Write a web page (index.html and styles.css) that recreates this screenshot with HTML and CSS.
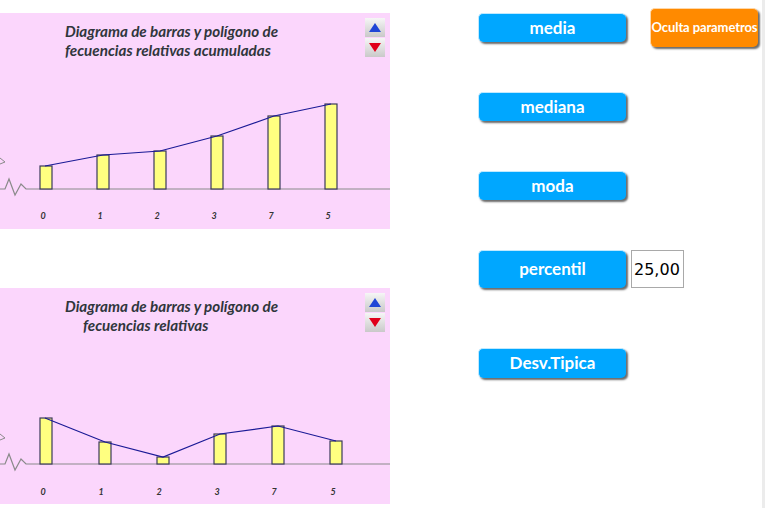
FILE: index.html
```html
<!DOCTYPE html>
<html lang="es">
<head>
  <meta charset="UTF-8">
  <title>Estadística</title>
  <link rel="stylesheet" href="styles.css">
</head>
<body>
  <div class="page">
    <div class="charts">
      <div class="chart">
        <div class="chart-head">
          <h2 class="chart-title">Diagrama de barras y polígono de<br>fecuencias relativas acumuladas</h2>
          <div class="spinner">
            <button class="spin">
              <svg width="20" height="19" viewBox="0 0 20 19"><polygon points="4,14 16,14 10,5" fill="#1f45d6"/></svg>
            </button>
            <button class="spin">
              <svg width="20" height="19" viewBox="0 0 20 19"><polygon points="4,5 16,5 10,14" fill="#e0001a"/></svg>
            </button>
          </div>
        </div>
        <svg class="plot" width="390" height="166" viewBox="0 0 390 166">
          <polyline class="axis-arrow" points="0,95 5,99 0,101"/>
          <polyline class="axis" points="0,126 5,126 9,116 15,132 21,121 26,126 390,126"/>
          <g class="bars">
            <rect x="40" y="103" width="12" height="23"/>
            <rect x="97" y="92" width="12" height="34"/>
            <rect x="154" y="88" width="12" height="38"/>
            <rect x="211" y="73" width="12" height="53"/>
            <rect x="268" y="53" width="12" height="73"/>
            <rect x="325" y="41" width="12" height="85"/>
          </g>
          <polyline class="poly" points="45,103 103,92 160,88 217,73 274,53 331,41"/>
          <g class="labels">
            <text x="43" y="156">0</text>
            <text x="100" y="156">1</text>
            <text x="157" y="156">2</text>
            <text x="214" y="156">3</text>
            <text x="271" y="156">7</text>
            <text x="328" y="156">5</text>
          </g>
        </svg>
      </div>

      <div class="chart">
        <div class="chart-head">
          <h2 class="chart-title">Diagrama de barras y polígono de<br><span class="indent">fecuencias relativas</span></h2>
          <div class="spinner">
            <button class="spin">
              <svg width="20" height="19" viewBox="0 0 20 19"><polygon points="4,14 16,14 10,5" fill="#1f45d6"/></svg>
            </button>
            <button class="spin">
              <svg width="20" height="19" viewBox="0 0 20 19"><polygon points="4,5 16,5 10,14" fill="#e0001a"/></svg>
            </button>
          </div>
        </div>
        <svg class="plot" width="390" height="166" viewBox="0 0 390 166">
          <polyline class="axis-arrow" points="0,96 5,100 0,102"/>
          <polyline class="axis" points="0,126 5,126 9,116 15,132 21,121 26,126 390,126"/>
          <g class="bars">
            <rect x="40" y="80" width="12" height="46"/>
            <rect x="99" y="104" width="12" height="22"/>
            <rect x="157" y="119" width="12" height="7"/>
            <rect x="214" y="96" width="12" height="30"/>
            <rect x="272" y="88" width="12" height="38"/>
            <rect x="330" y="103" width="12" height="23"/>
          </g>
          <polyline class="poly" points="45,80 105,104 163,119 220,96 278,88 336,103"/>
          <g class="labels">
            <text x="43" y="157">0</text>
            <text x="101" y="157">1</text>
            <text x="159" y="157">2</text>
            <text x="217" y="157">3</text>
            <text x="274" y="157">7</text>
            <text x="333" y="157">5</text>
          </g>
        </svg>
      </div>
    </div>

    <div class="controls">
      <div class="row row-first">
        <button class="btn">media</button>
        <button class="btn btn-orange">Oculta parametros</button>
      </div>
      <div class="row row-mediana">
        <button class="btn">mediana</button>
      </div>
      <div class="row row-moda">
        <button class="btn">moda</button>
      </div>
      <div class="row row-percentil">
        <button class="btn btn-tall">percentil</button>
        <input class="num" type="text" value="25,00">
      </div>
      <div class="row row-desv">
        <button class="btn btn-desv">Desv.Tipica</button>
      </div>
    </div>

    <div class="edge"></div>
  </div>
</body>
</html>
```

FILE: styles.css
```css
* {
  margin: 0;
  padding: 0;
  box-sizing: border-box;
}
body {
  background: #fff;
  font-family: Lato, 'Open Sans', sans-serif;
  overflow: hidden;
}
.page {
  display: flex;
  height: 508px;
}
.charts {
  width: 390px;
  flex-shrink: 0;
  padding-top: 13px;
  display: flex;
  flex-direction: column;
  gap: 59px;
}
.chart {
  width: 390px;
  height: 216px;
  background: #fbd6fc;
}
.chart-head {
  height: 50px;
  display: flex;
  justify-content: space-between;
  padding: 5px 5px 0 65px;
}
.chart-title {
  font-size: 15.2px;
  font-weight: 700;
  font-style: italic;
  line-height: 19px;
  color: #30363c;
  padding-top: 4px;
}
.indent {
  padding-left: 18px;
}
.spinner {
  display: flex;
  flex-direction: column;
  width: 20px;
}
.spin {
  display: block;
  width: 20px;
  height: 19px;
  border: none;
  background: linear-gradient(#f6f6f6, #c9c9c9);
}
.spin + .spin {
  margin-top: 1px;
}
.spin svg {
  display: block;
}
.plot {
  display: block;
}
.axis {
  fill: none;
  stroke: #8a8a8a;
  stroke-width: 1.2;
}
.axis-arrow {
  fill: none;
  stroke: #8a8a8a;
  stroke-width: 1;
}
.bars rect {
  fill: #ffff80;
  stroke: #3a3a5a;
  stroke-width: 1.2;
}
.poly {
  fill: none;
  stroke: #1a1a96;
  stroke-width: 1.2;
}
.labels text {
  font-family: Lato, sans-serif;
  font-size: 9px;
  font-weight: 700;
  font-style: italic;
  fill: #333;
  text-anchor: middle;
}
.controls {
  margin-left: 88px;
  padding-top: 8px;
  display: flex;
  flex-direction: column;
}
.row {
  display: flex;
  align-items: center;
}
.row-first {
  height: 39px;
  gap: 24px;
}
.row-mediana { margin-top: 45px; }
.row-moda { margin-top: 50px; }
.row-percentil { margin-top: 50px; gap: 5px; }
.row-desv { margin-top: 60px; }
.btn {
  width: 148px;
  height: 29px;
  background: #00a7ff;
  color: #fff;
  border: none;
  border-top: 1px solid #bfe9ff;
  border-left: 1px solid #bfe9ff;
  border-radius: 5px;
  box-shadow: 2px 2px 2px #6b6b6b;
  font-family: Lato, sans-serif;
  font-size: 17px;
  font-weight: 700;
  padding-bottom: 2px;
}
.btn-tall {
  height: 38px;
}
.btn-desv {
  height: 30px;
}
.btn-orange {
  width: 108px;
  height: 39px;
  background: #ff8a00;
  border-color: #ffd7a8;
  font-size: 13px;
  letter-spacing: -0.1px;
  white-space: nowrap;
  padding: 0 0 2px;
}
.num {
  width: 53px;
  height: 38px;
  border: 1px solid #a9a9a9;
  background: #fff;
  font-family: 'DejaVu Sans', sans-serif;
  font-size: 16px;
  color: #000;
  padding-left: 2px;
  outline: none;
}
.edge {
  margin-left: auto;
  width: 3px;
  height: 508px;
  background: #ececec;
}
```
